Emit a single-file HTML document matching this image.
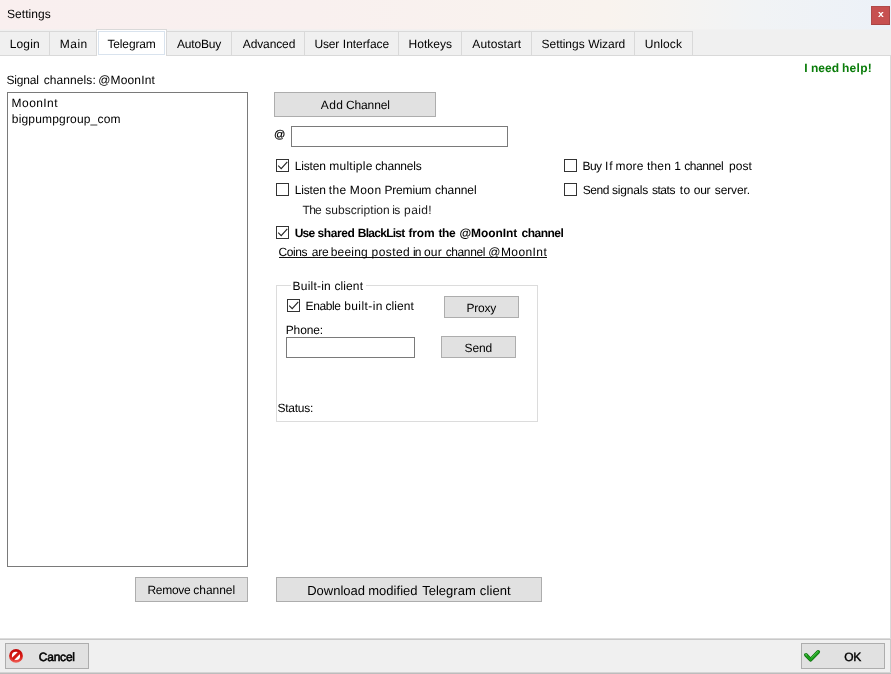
<!DOCTYPE html>
<html><head><meta charset="utf-8"><title>Settings</title>
<style>
*{box-sizing:border-box;margin:0;padding:0}
html,body{width:891px;height:674px;overflow:hidden;background:#fff}
body{position:relative;font-family:"Liberation Sans",sans-serif;font-size:12px;color:#000}
.a{position:absolute}
.t{position:absolute;white-space:nowrap;line-height:16px;height:16px;text-rendering:geometricPrecision}
#titlebar{left:0;top:0;width:891px;height:30px;box-shadow:inset 0 -1px 0 rgba(240,240,240,.6);background:linear-gradient(90deg,#f9efef 0%,#f9f0ef 35%,#f9f3ee 68%,#f1f3f5 85%,#ecf1f8 100%)}
#close{left:871px;top:6px;width:19px;height:19px;background:#c75050;border:1px solid #b04a4a;border-right-color:#a84444;border-bottom-color:#a84444}
#tabstrip{left:0;top:30px;width:891px;height:26px;background:#f0f0f0}
#tabline-top{left:0;top:31px;width:693px;height:1px;background:#d9d9d9}
#tabline-bot{left:0;top:55px;width:891px;height:1px;background:#d9d9d9}
.sep{position:absolute;top:31px;width:1px;height:24px;background:#d9d9d9}
#seltab{left:96px;top:29px;width:71px;height:27px;background:#fff;border:1px solid #d9d9d9;border-bottom:none}
#seltab i{position:absolute;left:1px;top:1px;width:67px;height:24px;border:1px solid #d9e3ee;display:block}
#content-right{left:890px;top:55px;width:1px;height:584px;background:#d9d9d9}
#bar-right{left:890px;top:638px;width:1px;height:36px;background:#c9c9c9}
#list{left:7px;top:92px;width:241px;height:475px;border:1px solid #7a7a7a;background:#fff}
.btn{position:absolute;background:#e1e1e1;border:1px solid #adadad}
.inp{position:absolute;background:#fff;border:1px solid #7a7a7a}
.cb{position:absolute;width:13px;height:13px;background:#fff;border:1px solid #333}
.cb svg{position:absolute;left:-1px;top:-1px;width:13px;height:13px;display:block}
#gb{left:276px;top:285px;width:262px;height:137px;border:1px solid #dcdcdc}
#gbgap{left:291px;top:284px;width:75px;height:3px;background:#fff}
#bottombar{left:0;top:638px;width:891px;height:36px;background:#f0f0f0}
#bb1{left:0;top:638px;width:891px;height:1px;background:#dcdcdc}
#bb2{left:0;top:639px;width:891px;height:1px;background:#c8c8c8}
#bb3{left:0;top:672px;width:891px;height:2px;background:linear-gradient(#d4d4d4 50%,#bcbcbc 50%)}
#linkline{left:279px;top:257px;width:268px;height:1px;background:#111}
#txt{position:absolute;left:0;top:0;width:891px;height:674px;will-change:transform}
#t_title{left:6.91px;top:6px;font-size:12px;font-weight:400;color:#000;letter-spacing:0.080px;word-spacing:-0.080px;}
#t_login{left:9.68px;top:36px;font-size:12px;font-weight:400;color:#000;letter-spacing:0.165px;word-spacing:-0.165px;}
#t_main{left:59.70px;top:36px;font-size:12px;font-weight:400;color:#000;letter-spacing:0.513px;word-spacing:-0.513px;}
#t_tg{left:107.45px;top:36px;font-size:12px;font-weight:400;color:#000;letter-spacing:-0.136px;word-spacing:0.136px;}
#t_ab{left:176.88px;top:36px;font-size:12px;font-weight:400;color:#000;letter-spacing:-0.147px;word-spacing:0.147px;}
#t_adv{left:242.82px;top:36px;font-size:12px;font-weight:400;color:#000;letter-spacing:-0.126px;word-spacing:0.126px;}
#t_ui_w0{left:314.54px;top:36px;font-size:12px;font-weight:400;color:#000;letter-spacing:-0.167px;word-spacing:0.167px;}
#t_ui_w1{left:342.85px;top:36px;font-size:12px;font-weight:400;color:#000;letter-spacing:-0.050px;word-spacing:0.050px;}
#t_hk{left:408.54px;top:36px;font-size:12px;font-weight:400;color:#000;letter-spacing:0.004px;word-spacing:-0.004px;}
#t_as{left:472.36px;top:36px;font-size:12px;font-weight:400;color:#000;letter-spacing:0.094px;word-spacing:-0.094px;}
#t_sw_w0{left:541.53px;top:36px;font-size:12px;font-weight:400;color:#000;letter-spacing:-0.031px;word-spacing:0.031px;}
#t_sw_w1{left:588.15px;top:36px;font-size:12px;font-weight:400;color:#000;letter-spacing:-0.045px;word-spacing:0.045px;}
#t_ul{left:644.78px;top:36px;font-size:12px;font-weight:400;color:#000;letter-spacing:0.096px;word-spacing:-0.096px;}
#t_help_w0{left:804.33px;top:60px;font-size:12px;font-weight:700;color:#0b7d0b;letter-spacing:0.024px;word-spacing:-0.024px;}
#t_help_w1{left:810.96px;top:60px;font-size:12px;font-weight:700;color:#0b7d0b;letter-spacing:0.026px;word-spacing:-0.026px;}
#t_help_w2{left:842.02px;top:60px;font-size:12px;font-weight:700;color:#0b7d0b;letter-spacing:0.264px;word-spacing:-0.264px;}
#t_sig_w0{left:6.55px;top:72px;font-size:12px;font-weight:400;color:#000;letter-spacing:-0.192px;word-spacing:0.192px;}
#t_sig_w1{left:43.74px;top:72px;font-size:12px;font-weight:400;color:#000;letter-spacing:0.078px;word-spacing:-0.078px;}
#t_sig2{left:98.13px;top:72px;font-size:12px;font-weight:400;color:#000;letter-spacing:0.181px;word-spacing:-0.181px;}
#t_l1{left:11.62px;top:95px;font-size:12px;font-weight:400;color:#000;letter-spacing:0.430px;word-spacing:-0.430px;}
#t_l2{left:11.79px;top:111px;font-size:12px;font-weight:400;color:#000;letter-spacing:0.175px;word-spacing:-0.175px;}
#t_add_w0{left:320.74px;top:97px;font-size:12px;font-weight:400;color:#000;letter-spacing:0.388px;word-spacing:-0.388px;}
#t_add_w1{left:346.06px;top:97px;font-size:12px;font-weight:400;color:#000;letter-spacing:-0.151px;word-spacing:0.151px;}
#t_at{left:273.97px;top:127px;font-size:11.2px;font-weight:400;color:#000;letter-spacing:0.000px;word-spacing:-0.000px;-webkit-text-stroke:0.2px #000;}
#t_c1_w0{left:294.63px;top:158px;font-size:12px;font-weight:400;color:#000;letter-spacing:-0.163px;word-spacing:0.163px;}
#t_c1_w1{left:329.20px;top:158px;font-size:12px;font-weight:400;color:#000;letter-spacing:0.262px;word-spacing:-0.262px;}
#t_c1_w2{left:375.29px;top:158px;font-size:12px;font-weight:400;color:#000;letter-spacing:-0.240px;word-spacing:0.240px;}
#t_c2_w0{left:294.63px;top:182px;font-size:12px;font-weight:400;color:#000;letter-spacing:-0.163px;word-spacing:0.163px;}
#t_c2_w1{left:328.79px;top:182px;font-size:12px;font-weight:400;color:#000;letter-spacing:0.305px;word-spacing:-0.305px;}
#t_c2_w2{left:349.79px;top:182px;font-size:12px;font-weight:400;color:#000;letter-spacing:0.459px;word-spacing:-0.459px;}
#t_c2_w3{left:384.45px;top:182px;font-size:12px;font-weight:400;color:#000;letter-spacing:-0.179px;word-spacing:0.179px;}
#t_c2_w4{left:435.08px;top:182px;font-size:12px;font-weight:400;color:#000;letter-spacing:-0.081px;word-spacing:0.081px;}
#t_sub_w0{left:302.60px;top:202px;font-size:12px;font-weight:400;color:#1a1a1a;letter-spacing:-0.752px;word-spacing:0.752px;}
#t_sub_w1{left:325.21px;top:202px;font-size:12px;font-weight:400;color:#1a1a1a;letter-spacing:0.045px;word-spacing:-0.045px;}
#t_sub_w2{left:392.27px;top:202px;font-size:12px;font-weight:400;color:#1a1a1a;letter-spacing:-0.752px;word-spacing:0.752px;}
#t_sub_w3{left:404.08px;top:202px;font-size:12px;font-weight:400;color:#1a1a1a;letter-spacing:0.398px;word-spacing:-0.398px;}
#t_c3_w0{left:294.73px;top:225px;font-size:12px;font-weight:700;color:#000;letter-spacing:-0.819px;word-spacing:0.819px;}
#t_c3_w1{left:317.38px;top:225px;font-size:12px;font-weight:700;color:#000;letter-spacing:-0.375px;word-spacing:0.375px;}
#t_c3_w2{left:357.85px;top:225px;font-size:12px;font-weight:700;color:#000;letter-spacing:-0.746px;word-spacing:0.746px;}
#t_c3_w3{left:408.48px;top:225px;font-size:12px;font-weight:700;color:#000;letter-spacing:-0.159px;word-spacing:0.159px;}
#t_c3_w4{left:438.42px;top:225px;font-size:12px;font-weight:700;color:#000;letter-spacing:-0.328px;word-spacing:0.328px;}
#t_c3_w5{left:459.38px;top:225px;font-size:12px;font-weight:700;color:#000;letter-spacing:-0.068px;word-spacing:0.068px;}
#t_c3_w6{left:521.49px;top:225px;font-size:12px;font-weight:700;color:#000;letter-spacing:-0.498px;word-spacing:0.498px;}
#t_link_w0{left:278.53px;top:244px;font-size:12px;font-weight:400;color:#000;letter-spacing:-0.400px;word-spacing:0.400px;}
#t_link_w1{left:311.70px;top:244px;font-size:12px;font-weight:400;color:#000;letter-spacing:-0.178px;word-spacing:0.178px;}
#t_link_w2{left:330.75px;top:244px;font-size:12px;font-weight:400;color:#000;letter-spacing:0.197px;word-spacing:-0.197px;}
#t_link_w3{left:371.53px;top:244px;font-size:12px;font-weight:400;color:#000;letter-spacing:0.438px;word-spacing:-0.438px;}
#t_link_w4{left:412.88px;top:244px;font-size:12px;font-weight:400;color:#000;letter-spacing:-0.706px;word-spacing:0.706px;}
#t_link_w5{left:424.03px;top:244px;font-size:12px;font-weight:400;color:#000;letter-spacing:0.185px;word-spacing:-0.185px;}
#t_link_w6{left:445.76px;top:244px;font-size:12px;font-weight:400;color:#000;letter-spacing:-0.410px;word-spacing:0.410px;}
#t_link_w7{left:488.33px;top:244px;font-size:12px;font-weight:400;color:#000;letter-spacing:0.414px;word-spacing:-0.414px;}
#t_c4_w0{left:582.61px;top:158px;font-size:12px;font-weight:400;color:#000;letter-spacing:-0.701px;word-spacing:0.701px;}
#t_c4_w1{left:605.12px;top:158px;font-size:12px;font-weight:400;color:#000;letter-spacing:0.699px;word-spacing:-0.699px;}
#t_c4_w2{left:615.45px;top:158px;font-size:12px;font-weight:400;color:#000;letter-spacing:0.240px;word-spacing:-0.240px;}
#t_c4_w3{left:646.91px;top:158px;font-size:12px;font-weight:400;color:#000;letter-spacing:0.228px;word-spacing:-0.228px;}
#t_c4_w4{left:674.13px;top:158px;font-size:12px;font-weight:400;color:#000;letter-spacing:-0.001px;word-spacing:0.001px;}
#t_c4_w5{left:684.14px;top:158px;font-size:12px;font-weight:400;color:#000;letter-spacing:-0.409px;word-spacing:0.409px;}
#t_c4_w6{left:728.98px;top:158px;font-size:12px;font-weight:400;color:#000;letter-spacing:0.072px;word-spacing:-0.072px;}
#t_c5_w0{left:582.75px;top:182px;font-size:12px;font-weight:400;color:#000;letter-spacing:-0.439px;word-spacing:0.439px;}
#t_c5_w1{left:611.89px;top:182px;font-size:12px;font-weight:400;color:#000;letter-spacing:-0.174px;word-spacing:0.174px;}
#t_c5_w2{left:651.88px;top:182px;font-size:12px;font-weight:400;color:#000;letter-spacing:-0.422px;word-spacing:0.422px;}
#t_c5_w3{left:679.70px;top:182px;font-size:12px;font-weight:400;color:#000;letter-spacing:0.580px;word-spacing:-0.580px;}
#t_c5_w4{left:693.77px;top:182px;font-size:12px;font-weight:400;color:#000;letter-spacing:-0.269px;word-spacing:0.269px;}
#t_c5_w5{left:714.81px;top:182px;font-size:12px;font-weight:400;color:#000;letter-spacing:-0.119px;word-spacing:0.119px;}
#t_gb_w0{left:292.62px;top:278px;font-size:12px;font-weight:400;color:#000;letter-spacing:0.200px;word-spacing:-0.200px;}
#t_gb_w1{left:334.41px;top:278px;font-size:12px;font-weight:400;color:#000;letter-spacing:0.114px;word-spacing:-0.114px;}
#t_en_w0{left:305.61px;top:298px;font-size:12px;font-weight:400;color:#000;letter-spacing:-0.401px;word-spacing:0.401px;}
#t_en_w1{left:344.14px;top:298px;font-size:12px;font-weight:400;color:#000;letter-spacing:0.435px;word-spacing:-0.435px;}
#t_en_w2{left:385.42px;top:298px;font-size:12px;font-weight:400;color:#000;letter-spacing:0.079px;word-spacing:-0.079px;}
#t_proxy{left:466.47px;top:300px;font-size:12px;font-weight:400;color:#000;letter-spacing:-0.201px;word-spacing:0.201px;}
#t_phone{left:285.76px;top:322px;font-size:12px;font-weight:400;color:#000;letter-spacing:-0.149px;word-spacing:0.149px;}
#t_send{left:464.54px;top:340px;font-size:12px;font-weight:400;color:#000;letter-spacing:-0.110px;word-spacing:0.110px;}
#t_status{left:277.47px;top:400px;font-size:12px;font-weight:400;color:#000;letter-spacing:-0.241px;word-spacing:0.241px;}
#t_rm_w0{left:147.47px;top:582px;font-size:12px;font-weight:400;color:#000;letter-spacing:-0.306px;word-spacing:0.306px;}
#t_rm_w1{left:193.28px;top:582px;font-size:12px;font-weight:400;color:#000;letter-spacing:-0.027px;word-spacing:0.027px;}
#t_dl_w0{left:307.18px;top:583px;font-size:13px;font-weight:400;color:#000;letter-spacing:-0.001px;word-spacing:0.001px;}
#t_dl_w1{left:368.17px;top:583px;font-size:13px;font-weight:400;color:#000;letter-spacing:0.041px;word-spacing:-0.041px;}
#t_dl_w2{left:422.17px;top:583px;font-size:13px;font-weight:400;color:#000;letter-spacing:0.025px;word-spacing:-0.025px;}
#t_dl_w3{left:479.86px;top:583px;font-size:13px;font-weight:400;color:#000;letter-spacing:0.099px;word-spacing:-0.099px;}
#t_cancel{left:38.78px;top:649px;font-size:12px;font-weight:400;color:#000;letter-spacing:-0.223px;word-spacing:0.223px;-webkit-text-stroke:0.55px #000;}
#t_ok{left:844.35px;top:649px;font-size:12px;font-weight:400;color:#000;letter-spacing:-0.333px;word-spacing:0.333px;-webkit-text-stroke:0.4px #000;}
</style></head>
<body>
<div class="a" id="titlebar"></div>
<div class="a" id="close"></div>
<div class="a" id="tabstrip"></div>
<div class="a" id="tabline-top"></div>
<div class="a" id="tabline-bot"></div>
<div class="sep" style="left:49px"></div>
<div class="sep" style="left:231px"></div>
<div class="sep" style="left:304px"></div>
<div class="sep" style="left:398px"></div>
<div class="sep" style="left:461px"></div>
<div class="sep" style="left:531px"></div>
<div class="sep" style="left:634px"></div>
<div class="sep" style="left:692px"></div>
<div class="a" id="seltab"><i></i></div>
<div class="a" id="content-right"></div>

<div class="a" id="list"></div>
<div class="btn" style="left:274px;top:92px;width:162px;height:25px"></div>
<div class="inp" style="left:291px;top:126px;width:217px;height:21px"></div>

<div class="cb" style="left:276px;top:159px"><svg viewBox="0 0 13 13"><path d="M2.2 6.6 L5.2 9.6 L11.3 2.9" fill="none" stroke="#222" stroke-width="1.1"/></svg></div>
<div class="cb" style="left:276px;top:183px"></div>
<div class="cb" style="left:276px;top:226px"><svg viewBox="0 0 13 13"><path d="M2.2 6.6 L5.2 9.6 L11.3 2.9" fill="none" stroke="#222" stroke-width="1.1"/></svg></div>
<div class="cb" style="left:564px;top:159px"></div>
<div class="cb" style="left:564px;top:183px"></div>

<div class="a" id="linkline"></div>
<div class="a" id="gb"></div>
<div class="a" id="gbgap"></div>
<div class="cb" style="left:287px;top:299px"><svg viewBox="0 0 13 13"><path d="M2.2 6.6 L5.2 9.6 L11.3 2.9" fill="none" stroke="#222" stroke-width="1.1"/></svg></div>
<div class="btn" style="left:444px;top:296px;width:75px;height:22px"></div>
<div class="inp" style="left:286px;top:337px;width:129px;height:21px"></div>
<div class="btn" style="left:441px;top:336px;width:75px;height:22px"></div>

<div class="btn" style="left:135px;top:577px;width:113px;height:25px"></div>
<div class="btn" style="left:276px;top:577px;width:266px;height:25px"></div>

<div class="a" id="bottombar"></div>
<div class="a" id="bar-right"></div><div class="a" id="bb1"></div><div class="a" id="bb2"></div><div class="a" id="bb3"></div>
<div class="btn" style="left:5px;top:643px;width:84px;height:26px"></div>
<div class="btn" style="left:801px;top:643px;width:84px;height:26px"></div>

<svg class="a" id="ico-cancel" style="left:8px;top:648px" width="16" height="16" viewBox="0 0 16 16">
<defs><linearGradient id="rg" x1="0" y1="0" x2="0" y2="1"><stop offset="0" stop-color="#bf0606"/><stop offset="0.55" stop-color="#d81a14"/><stop offset="1" stop-color="#f0625a"/></linearGradient></defs>
<circle cx="8" cy="7.9" r="6.9" fill="url(#rg)"/>
<circle cx="8" cy="7.9" r="4.1" fill="#fff"/>
<path d="M4.6 11.3 L11.4 4.5" stroke="#d31812" stroke-width="3.1" fill="none"/>
</svg>

<svg class="a" id="ico-ok" style="left:802px;top:647px" width="20" height="18" viewBox="0 0 20 18">
<path d="M3.9 7.9 L8.6 12.7 L16.2 4.9" fill="none" stroke="#0c6c0c" stroke-width="3.7" stroke-linecap="round" stroke-linejoin="round"/>
<path d="M3.9 7.9 L8.6 12.7 L16.2 4.9" fill="none" stroke="#1f9f1f" stroke-width="2.5" stroke-linecap="round" stroke-linejoin="round"/>
<path d="M9.6 10.6 L15.8 4.5" fill="none" stroke="#52d052" stroke-width="0.9" stroke-linecap="round"/>
<path d="M3.7 7.2 L4.5 7.9" fill="none" stroke="#7fe87f" stroke-width="0.9" stroke-linecap="round"/>
</svg>

<div id="txt">
<span class="t" id="closex" style="left:877.9px;top:6.9px;color:#fff;font-weight:700;font-size:9.6px;transform:scaleX(1.08);transform-origin:0 0">x</span>
<span class="t" id="t_title">Settings</span>
<span class="t" id="t_login">Login</span>
<span class="t" id="t_main">Main</span>
<span class="t" id="t_tg">Telegram</span>
<span class="t" id="t_ab">AutoBuy</span>
<span class="t" id="t_adv">Advanced</span>
<span id="t_ui"><span class="t" id="t_ui_w0">User</span> <span class="t" id="t_ui_w1">Interface</span></span>
<span class="t" id="t_hk">Hotkeys</span>
<span class="t" id="t_as">Autostart</span>
<span id="t_sw"><span class="t" id="t_sw_w0">Settings</span> <span class="t" id="t_sw_w1">Wizard</span></span>
<span class="t" id="t_ul">Unlock</span>
<span id="t_help"><span class="t" id="t_help_w0">I</span> <span class="t" id="t_help_w1">need</span> <span class="t" id="t_help_w2">help!</span></span>
<span id="t_sig"><span class="t" id="t_sig_w0">Signal</span> <span class="t" id="t_sig_w1">channels:</span></span>
<span class="t" id="t_sig2">@MoonInt</span>
<span class="t" id="t_l1">MoonInt</span>
<span class="t" id="t_l2">bigpumpgroup_com</span>
<span id="t_add"><span class="t" id="t_add_w0">Add</span> <span class="t" id="t_add_w1">Channel</span></span>
<span class="t" id="t_at">@</span>
<span id="t_c1"><span class="t" id="t_c1_w0">Listen</span> <span class="t" id="t_c1_w1">multiple</span> <span class="t" id="t_c1_w2">channels</span></span>
<span id="t_c2"><span class="t" id="t_c2_w0">Listen</span> <span class="t" id="t_c2_w1">the</span> <span class="t" id="t_c2_w2">Moon</span> <span class="t" id="t_c2_w3">Premium</span> <span class="t" id="t_c2_w4">channel</span></span>
<span id="t_sub"><span class="t" id="t_sub_w0">The</span> <span class="t" id="t_sub_w1">subscription</span> <span class="t" id="t_sub_w2">is</span> <span class="t" id="t_sub_w3">paid!</span></span>
<span id="t_c3"><span class="t" id="t_c3_w0">Use</span> <span class="t" id="t_c3_w1">shared</span> <span class="t" id="t_c3_w2">BlackList</span> <span class="t" id="t_c3_w3">from</span> <span class="t" id="t_c3_w4">the</span> <span class="t" id="t_c3_w5">@MoonInt</span> <span class="t" id="t_c3_w6">channel</span></span>
<span id="t_link"><span class="t" id="t_link_w0">Coins</span> <span class="t" id="t_link_w1">are</span> <span class="t" id="t_link_w2">beeing</span> <span class="t" id="t_link_w3">posted</span> <span class="t" id="t_link_w4">in</span> <span class="t" id="t_link_w5">our</span> <span class="t" id="t_link_w6">channel</span> <span class="t" id="t_link_w7">@MoonInt</span></span>
<span id="t_c4"><span class="t" id="t_c4_w0">Buy</span> <span class="t" id="t_c4_w1">If</span> <span class="t" id="t_c4_w2">more</span> <span class="t" id="t_c4_w3">then</span> <span class="t" id="t_c4_w4">1</span> <span class="t" id="t_c4_w5">channel</span> <span class="t" id="t_c4_w6">post</span></span>
<span id="t_c5"><span class="t" id="t_c5_w0">Send</span> <span class="t" id="t_c5_w1">signals</span> <span class="t" id="t_c5_w2">stats</span> <span class="t" id="t_c5_w3">to</span> <span class="t" id="t_c5_w4">our</span> <span class="t" id="t_c5_w5">server.</span></span>
<span id="t_gb"><span class="t" id="t_gb_w0">Built-in</span> <span class="t" id="t_gb_w1">client</span></span>
<span id="t_en"><span class="t" id="t_en_w0">Enable</span> <span class="t" id="t_en_w1">built-in</span> <span class="t" id="t_en_w2">client</span></span>
<span class="t" id="t_proxy">Proxy</span>
<span class="t" id="t_phone">Phone:</span>
<span class="t" id="t_send">Send</span>
<span class="t" id="t_status">Status:</span>
<span id="t_rm"><span class="t" id="t_rm_w0">Remove</span> <span class="t" id="t_rm_w1">channel</span></span>
<span id="t_dl"><span class="t" id="t_dl_w0">Download</span> <span class="t" id="t_dl_w1">modified</span> <span class="t" id="t_dl_w2">Telegram</span> <span class="t" id="t_dl_w3">client</span></span>
<span class="t" id="t_cancel">Cancel</span>
<span class="t" id="t_ok">OK</span>
</div>
</body></html>
